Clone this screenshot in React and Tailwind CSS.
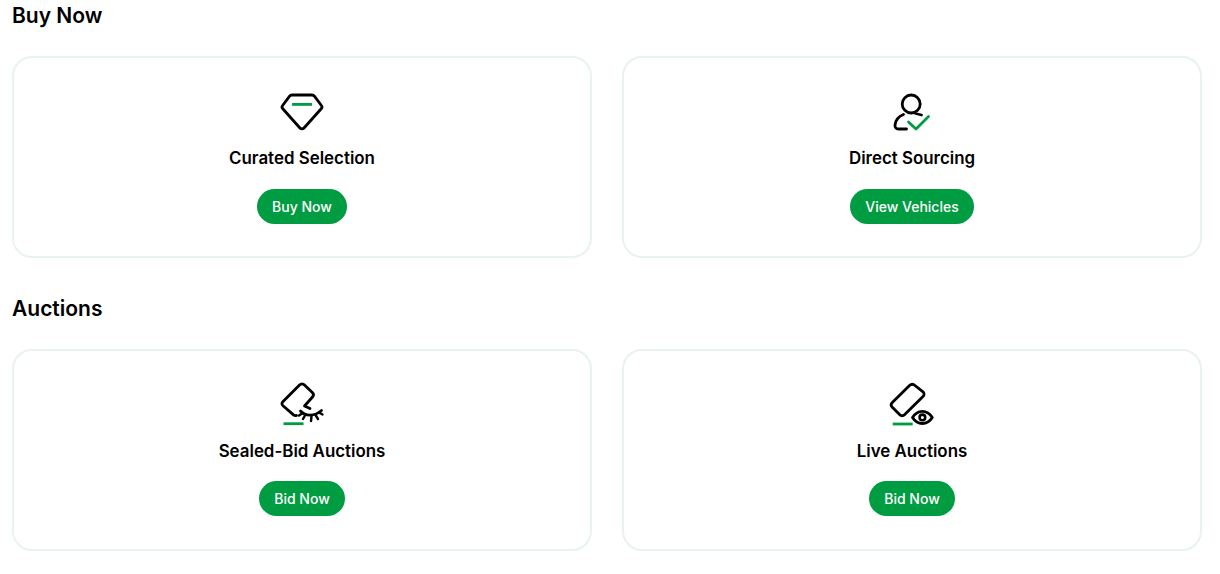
import React from 'react'

function DiamondIcon() {
  return (
    <svg width="48" height="48" viewBox="0 0 48 48" fill="none" strokeLinecap="round" strokeLinejoin="round">
      <path d="M14 7h20c1 0 1.800.4 2.400 1.200l7 9.300c.8 1 .7 2.300-.2 3.200L26 40c-1.100 1.200-3 1.200-4.100 0L4.800 20.700c-.9-.9-1-2.200-.2-3.200l7-9.300C12.200 7.400 13 7 14 7z" stroke="#000" strokeWidth="2.800" />
      <path d="M14 16.400h20" stroke="#009C41" strokeWidth="2.800" strokeLinecap="butt" />
    </svg>
  )
}

function PersonIcon() {
  return (
    <svg width="48" height="48" viewBox="0 0 48 48" fill="none" strokeLinecap="round" strokeLinejoin="round">
      <circle cx="23.200" cy="16" r="9" stroke="#000" strokeWidth="2.800" />
      <path d="M15.500 26.500C10.500 28.500 7.500 32.500 7 37c-.2 2.500 1 4 3.500 4h8" stroke="#000" strokeWidth="2.800" />
      <path d="M27.500 25.500l6 1.500" stroke="#000" strokeWidth="2.800" />
      <path d="M20.500 34l7.500 7L40.500 28.500" stroke="#009C41" strokeWidth="2.800" />
    </svg>
  )
}

function SealedIcon() {
  return (
    <svg width="48" height="48" viewBox="0 0 48 48" fill="none" strokeLinecap="round" strokeLinejoin="round">
      <path d="M18.500 34.500c-1 .4-2 .2-3-.6L5 24.800c-1.400-1.200-1.400-2.800-.2-4L21.500 4c1.500-1.500 3.600-1.500 5 0l7.800 7.500c1.500 1.400 1.500 3 .2 4.500L26.500 25l5.500 2.500" stroke="#000" strokeWidth="2.800" />
      <path d="M22.500 30c5 5.500 14 5.500 21-.5" stroke="#000" strokeWidth="2.800" />
      <path d="M25 38l2.500-4.500M33 40l.5-4.500M40 38l-2.500-4M44.500 33.500l-3.500-2M21 34.500l3-2" stroke="#000" strokeWidth="2.400" />
      <path d="M5.500 42.700h20" stroke="#009C41" strokeWidth="2.800" strokeLinecap="butt" />
    </svg>
  )
}

function LiveIcon() {
  return (
    <svg width="48" height="48" viewBox="0 0 48 48" fill="none" strokeLinecap="round" strokeLinejoin="round">
      <path d="M21.500 4.500 4.300 21.500c-1.400 1.400-1.400 3.300 0 4.700l7.500 7.500c1.400 1.400 3.300 1.400 4.700 0L35 15.500c1.400-1.400 1.400-3.300 0-4.700L27 4.500c-1.700-1.600-3.800-1.600-5.500 0z" stroke="#000" strokeWidth="2.800" />
      <path d="M24.500 36.500c2.500-4 6-6.200 9.800-6.200s7.500 2.200 10 6.200c-2.500 4-6.200 6-10 6s-7.300-2-9.800-6z" stroke="#000" strokeWidth="2.800" />
      <circle cx="34.400" cy="36.400" r="2.800" stroke="#000" strokeWidth="2.600" />
      <path d="M4.700 43h20" stroke="#009C41" strokeWidth="2.800" strokeLinecap="butt" />
    </svg>
  )
}

function Card({ icon, title, action, buttonTop = 'mt-[18px]' }) {
  return (
    <div className="flex h-[202px] flex-col items-center rounded-[20px] border-2 border-[#E8F3EE] bg-white pt-[30px]">
      {icon}
      <h3 className="mt-[9px] text-[16.900px] leading-[26px] font-semibold text-black">{title}</h3>
      <button className={`${buttonTop} flex h-[35px] items-center rounded-full bg-[#009C41] px-[15px] pb-px text-[14px] font-medium text-white`}>
        {action}
      </button>
    </div>
  )
}

export default function App() {
  return (
    <div className="h-[574px] w-[1220px] bg-white pl-3 pr-[18px] font-['Inter',sans-serif]">
      <h2 className="pt-[3px] text-[21px] leading-[26px] font-semibold text-black">Buy Now</h2>
      <div className="mt-[27px] grid grid-cols-2 gap-[30px]">
        <Card icon={<DiamondIcon />} title="Curated Selection" action="Buy Now" />
        <Card icon={<PersonIcon />} title="Direct Sourcing" action="View Vehicles" />
      </div>
      <h2 className="mt-[38px] text-[21px] leading-[26px] font-semibold text-black">Auctions</h2>
      <div className="mt-[27px] grid grid-cols-2 gap-[30px]">
        <Card icon={<SealedIcon />} title="Sealed-Bid Auctions" action="Bid Now" buttonTop="mt-[17px]" />
        <Card icon={<LiveIcon />} title="Live Auctions" action="Bid Now" buttonTop="mt-[17px]" />
      </div>
    </div>
  )
}
